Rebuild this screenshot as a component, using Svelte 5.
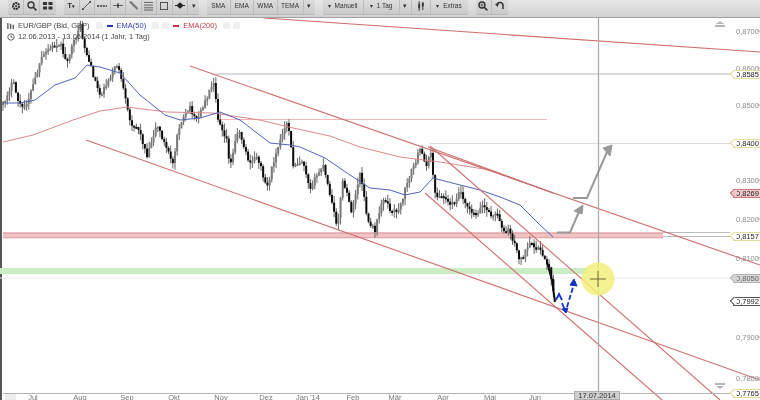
<script>
	// close prices traced by hand as [x, y] in page pixels
	const path = [[3,105],[8,92],[13,82],[18,100],[23,110],[30,95],[37,73],[42,58],[48,50],[55,45],[60,42],[66,62],[72,48],[80,24],[84,45],[90,65],[100,95],[106,85],[112,72],[118,64],[125,98],[130,122],[138,128],[147,155],[157,124],[167,150],[173,163],[178,128],[190,108],[197,120],[207,97],[214,80],[218,118],[227,140],[230,168],[238,128],[250,165],[257,155],[267,188],[277,148],[288,122],[293,165],[303,160],[310,188],[323,165],[337,226],[343,180],[352,213],[360,172],[368,223],[375,230],[383,197],[392,213],[400,208],[407,182],[420,150],[427,165],[431,152],[435,195],[443,197],[453,205],[460,190],[467,205],[475,215],[483,205],[490,215],[498,215],[505,235],[508,228],[513,240],[520,260],[530,245],[538,248],[547,262],[552,280],[555,300]];

	const ema50 = "3,103 20,103 35,100 55,85 75,78 87,65 100,67 120,73 140,95 165,115 180,120 200,118 220,112 240,120 270,143 290,145 300,147 325,158 350,175 370,188 390,190 405,195 420,192 433,178 460,185 480,190 500,197 520,205 540,225 553,237";
	const ema200 = "3,142 33,135 73,120 100,111 127,107 167,112 213,113 260,120 293,128 330,136 360,147 400,157 440,162 490,170 553,193";

	const trend = [
		[264,18,760,52],
		[190,66,760,265],
		[86,140,760,380],
		[430,146,720,400],
		[425,193,662,400],
		[428,147,553,193]
	];

	const priceTicks = [
		["0,8700", 31], ["0,8600", 68], ["0,8500", 105], ["0,8300", 180],
		["0,8200", 219], ["0,8100", 258], ["0,7900", 337], ["0,7800", 378]
	];

	const tags = [
		{ label: "0,8585", y: 74, kind: "yellow" },
		{ label: "0,8400", y: 143, kind: "yellow" },
		{ label: "0,8269", y: 193, kind: "red" },
		{ label: "0,8157", y: 236, kind: "yellow" },
		{ label: "0,8050", y: 278, kind: "grey" },
		{ label: "0,7992", y: 301, kind: "dark" },
		{ label: "0,7765", y: 393, kind: "yellow" }
	];

	const months = [
		["Jul", 33], ["Aug", 80], ["Sep", 127], ["Okt", 174], ["Nov", 221], ["Dez", 266],
		["Jan '14", 308], ["Feb", 353], ["Mär", 395], ["Apr", 443], ["Mai", 490], ["Jun", 535]
	];

	// small seeded generator so the candles stay the same on every load
	let seed = 17;
	const rnd = () => {
		seed = (seed * 16807) % 2147483647;
		return seed / 2147483647;
	};

	const closeAt = (x) => {
		for (let i = 1; i < path.length; i++) {
			if (x <= path[i][0]) {
				const [x0, y0] = path[i - 1];
				const [x1, y1] = path[i];
				return y0 + ((y1 - y0) * (x - x0)) / (x1 - x0);
			}
		}
		return path[path.length - 1][1];
	};

	const candles = [];
	let prev = closeAt(3);
	for (let x = 3; x <= 555; x += 2.15) {
		const close = closeAt(x) + (rnd() - 0.5) * 5;
		const top = Math.min(prev, close);
		const bottom = Math.max(prev, close);
		candles.push({
			x,
			high: top - rnd() * 7,
			low: bottom + rnd() * 7,
			top,
			height: Math.max(bottom - top, 2),
			down: close > prev
		});
		prev = close;
	}
</script>

<div class="page">
	<div class="toolbar">
		<div class="group">
			<span class="btn icon"><svg width="10" height="10" viewBox="0 0 10 10"><circle cx="5" cy="5" r="3" fill="none" stroke="#333" stroke-width="2" stroke-dasharray="2 0.6"/><circle cx="5" cy="5" r="1" fill="#333"/></svg></span>
			<span class="btn icon"><svg width="10" height="10" viewBox="0 0 10 10"><circle cx="4" cy="4" r="3" fill="none" stroke="#333" stroke-width="1.4"/><path d="M6 6l3.4 3.4" stroke="#333" stroke-width="1.6"/></svg></span>
			<span class="btn icon"><svg width="10" height="10" viewBox="0 0 10 10"><path d="M0 1h4v3H0zM5.500 1h4v3h-4zM0 5.500h4v3H0zM5.500 5.500h4v3h-4z" fill="#333"/></svg></span>
		</div>
		<div class="group">
			<span class="btn tool text">T<small>▾</small></span>
			<span class="btn tool"><svg width="9" height="9" viewBox="0 0 11 11"><path d="M1 10L10 1" stroke="#444" stroke-width="1"/><rect x="0" y="9" width="2" height="2" fill="#333"/><rect x="9" y="0" width="2" height="2" fill="#333"/></svg></span>
			<span class="btn tool"><svg width="10" height="4" viewBox="0 0 11 4"><path d="M0 2h11" stroke="#333" stroke-width="1.6" stroke-dasharray="2.200 1"/></svg></span>
			<span class="btn tool"><svg width="10" height="7" viewBox="0 0 11 7"><path d="M0 3.500h11" stroke="#555"/><path d="M5.500 1v5" stroke="#333" stroke-width="1.6"/></svg></span>
			<span class="btn tool"><svg width="9" height="9" viewBox="0 0 9 9"><path d="M0 1L2 0l7 7-1 2z" fill="#777"/></svg></span>
			<span class="btn tool"><svg width="9" height="10" viewBox="0 0 10 10"><path d="M0 1h10M0 4h10M0 7h10M0 9.500h10" stroke="#555"/></svg></span>
			<span class="btn tool"><svg width="8" height="8" viewBox="0 0 9 9"><rect x="0.500" y="0.500" width="8" height="8" fill="none" stroke="#444"/></svg></span>
			<span class="btn tool"><svg width="10" height="7" viewBox="0 0 11 7"><path d="M5.500 0l4 3.500-4 3.500-4-3.500z" fill="#222"/><path d="M0 3.500h11" stroke="#222"/></svg></span>
			<span class="btn arrow">▾</span>
		</div>
		<div class="group">
			<span class="btn study">SMA</span>
			<span class="btn study">EMA</span>
			<span class="btn study">WMA</span>
			<span class="btn study tema">TEMA</span>
			<span class="btn arrow">▾</span>
		</div>
		<div class="group">
			<span class="btn manual"><i>▾</i>Manuell</span>
			<span class="btn day"><i>▾</i>1 Tag</span>
			<span class="btn arrow wide">▾</span>
			<span class="btn bars"><svg width="8" height="10" viewBox="0 0 8 11"><path d="M2 0v11M6 1v9" stroke="#333"/><path d="M1 3h2v5H1zM5 2h2v4H5z" fill="#333"/></svg></span>
			<span class="btn extras"><i>▾</i>Extras</span>
		</div>
		<div class="group">
			<span class="btn icon"><svg width="10" height="10" viewBox="0 0 10 10"><circle cx="4" cy="4" r="3" fill="none" stroke="#333" stroke-width="1.4"/><path d="M6 6l3.400 3.400" stroke="#333" stroke-width="1.6"/><path d="M2.500 4h3M4 2.500v3" stroke="#333" stroke-width=".8"/></svg></span>
			<span class="btn icon"><svg width="10" height="9" viewBox="0 0 10 9"><path d="M2 4a3 3 0 1 1 6 1v3" fill="none" stroke="#333" stroke-width="1.500"/><path d="M0 3l2.500 3L4 2.500z" fill="#333"/></svg></span>
		</div>
	</div>

	<div class="chart">
		<svg class="plot" width="760" height="382" viewBox="0 18 760 382">
			<!-- horizontal levels -->
			<line x1="0" y1="278" x2="730" y2="278" stroke="#ececec" />
			<line x1="430" y1="143.500" x2="730" y2="143.500" stroke="#dcdcdc" />
			<line x1="215" y1="74" x2="730" y2="74" stroke="#b8b8b8" />
			<line x1="218" y1="119.500" x2="547" y2="119.500" stroke="#f2b8b8" />
			<line x1="663" y1="232.500" x2="730" y2="232.500" stroke="#bbb" />
			<line x1="663" y1="236.500" x2="730" y2="236.500" stroke="#bbb" />
			<rect x="3" y="232.500" width="660" height="6" fill="#f0c4c4" />
			<line x1="3" y1="233" x2="663" y2="233" stroke="#dc9494" />
			<line x1="3" y1="237.500" x2="663" y2="237.500" stroke="#e4a8a8" />
			<rect x="0" y="268" width="588" height="6" fill="#cbecc5" />

			<!-- candles -->
			{#each candles as c}
				<line x1={c.x} y1={c.high} x2={c.x} y2={c.low} stroke="#666" stroke-width="1" />
				<rect x={c.x - 1} y={c.top} width="2" height={c.height} fill={c.down ? "#0c0c0c" : "#7a7a7a"} />
			{/each}
			<polyline points="547,262 552,280 555,302" fill="none" stroke="#0c0c0c" stroke-width="2" />

			<!-- averages -->
			<polyline class="curve" points={ema200} stroke="#dc8a8a" />
			<polyline class="curve" points={ema50} stroke="#5364b8" />

			<!-- trend lines -->
			{#each trend as [x1, y1, x2, y2]}
				<line {x1} {y1} {x2} {y2} stroke="#cf6f6f" stroke-width="1.100" />
			{/each}

			<!-- crosshair -->
			<line x1="598.500" y1="18" x2="598.500" y2="393" stroke="#a8a8a8" stroke-width="1.200" />
			<circle cx="598" cy="279" r="16.500" fill="#f2ee7c" fill-opacity="0.85" />
			<path d="M590 279h16M598 271v16" stroke="#6b6b35" stroke-width="1" />

			<!-- hand drawn arrows -->
			<path class="grey-arrow" d="M557 232.500h13l10-23" />
			<path d="M583 205l-9 6 8 3z" fill="#999" stroke="#999" />
			<path class="grey-arrow" d="M573 198h14l20-46" />
			<path d="M612 145l-9 3 7 8z" fill="#999" stroke="#999" />
			<path class="blue-arrow" d="M556 300l3-6 3 6" />
			<path class="blue-arrow" d="M562 303l3 7" />
			<path d="M562 309l6-1-2 5z" fill="#1433c4" stroke="#1433c4" />
			<path class="blue-arrow" d="M567 307l7-23" stroke-dasharray="5 2.500" />
			<path d="M570 285l4-6 3 7z" fill="#1433c4" stroke="#1433c4" />

			<!-- right axis -->
			{#each priceTicks as [label, y]}
				<text class="price" x="736" y={y + 3}>{label}</text>
				<line x1="757" y1={y} x2="760" y2={y} stroke="#aaa" />
			{/each}

			<!-- bottom axis -->
			<line x1="3" y1="393.500" x2="760" y2="393.500" stroke="#b5b5b5" />
			<rect x="5" y="394" width="11" height="6" fill="#ececec" />
			{#each months as [label, x]}
				<text class="month" {x} y="400" text-anchor="middle">{label}</text>
			{/each}

			<!-- scroll handles -->
			<path d="M716 24l4-3 4 3zM715 25h10v2h-10z" fill="#b5b5b5" />
			<path d="M715 383h10v2h-10zM716 386h8l-4 3z" fill="#b5b5b5" />
		</svg>

		<div class="legend">
			<div class="legend-row">
				<svg class="symbol" width="8" height="8" viewBox="0 0 9 9"><path d="M1 1v7M4 2v6M7 3v5" stroke="#555" stroke-width="1.500"/></svg>
				<span class="name">EUR/GBP (Bid, GBP)</span>
				<span class="ghost first"></span>
				<span class="dash blue"></span>
				<span class="ema blue-text">EMA(50)</span>
				<span class="ghost first"></span>
				<span class="ghost"></span>
				<span class="dash red"></span>
				<span class="ema red-text">EMA(200)</span>
				<span class="ghost first"></span>
				<span class="ghost"></span>
			</div>
			<div class="legend-row">
				<svg class="symbol clock" width="8" height="8" viewBox="0 0 10 10"><circle cx="5" cy="5" r="4" fill="none" stroke="#444"/><path d="M5 2.500V5l2 1" fill="none" stroke="#444"/></svg>
				<span class="name">12.06.2013 - 13.06.2014 (1 Jahr, 1 Tag)</span>
			</div>
		</div>

		{#each tags as tag}
			<span class="tag {tag.kind}" style="top: {tag.y - 18}px">{tag.label}</span>
		{/each}

		<span class="date-box">17.07.2014</span>
	</div>
</div>

<style>
	:global(body) {
		margin: 0;
		background: #fff;
	}

	.page {
		width: 760px;
		height: 400px;
		display: flex;
		flex-direction: column;
		overflow: hidden;
		font-family: "Liberation Sans", Arial, sans-serif;
		filter: blur(0.4px);
	}

	.toolbar {
		height: 18px;
		flex: none;
		box-sizing: border-box;
		display: flex;
		gap: 8px;
		padding-left: 8px;
		background: linear-gradient(#e6e6e6, #d2d2d2);
		border-bottom: 1px solid #a2a2a2;
	}

	.group {
		height: 14px;
		display: flex;
		background: linear-gradient(#dcdcdc, #cacaca);
		border-radius: 0 0 2px 2px;
		box-shadow: 0 1px 0 #b8b8b8;
	}

	.btn {
		display: flex;
		align-items: center;
		justify-content: center;
		box-sizing: border-box;
		height: 100%;
		border-right: 1px solid #bcbcbc;
		font-size: 6.500px;
		color: #333;
		padding-bottom: 3px;
		white-space: nowrap;
	}

	.btn:last-child {
		border-right: 0;
	}

	.btn i {
		font-style: normal;
		font-size: 6px;
		margin-right: 4px;
	}

	.icon { width: 16px; }
	.tool { width: 15.500px; }
	.text { font-size: 8px; font-weight: bold; }
	.text small { font-size: 5px; }
	.arrow { width: 11px; font-size: 7px; }
	.arrow.wide { width: 12px; }
	.study { width: 23.500px; }
	.tema { width: 26px; }
	.manual { width: 41px; }
	.day { width: 36px; }
	.bars { width: 19px; }
	.extras { width: 37px; }

	.chart {
		flex: 1;
		position: relative;
		background: #fefefe;
		box-shadow: inset 2px 0 0 #555;
	}

	.plot {
		position: absolute;
		inset: 0;
		display: block;
	}

	.curve {
		fill: none;
		stroke-width: 1;
	}

	.grey-arrow {
		fill: none;
		stroke: #999;
		stroke-width: 2;
	}

	.blue-arrow {
		fill: none;
		stroke: #1433c4;
		stroke-width: 1.800;
	}

	.price {
		font-size: 7.500px;
		fill: #8c8c8c;
	}

	.month {
		font-size: 7.500px;
		fill: #777;
	}

	.legend {
		position: absolute;
		left: 7px;
		top: 2px;
		display: flex;
		flex-direction: column;
		gap: 0;
		font-size: 7.500px;
		line-height: 11px;
		color: #444;
	}

	.legend-row {
		display: flex;
		align-items: center;
	}

	.symbol {
		margin-right: 3px;
	}

	.ghost {
		width: 7px;
		height: 7px;
		margin-left: 3px;
		background: #efefef;
		border-radius: 1px;
	}

	.ghost.first {
		margin-left: 6px;
	}

	.dash {
		width: 6px;
		height: 2px;
		margin: 0 4px 0 4px;
	}

	.dash.blue { background: #2a35b0; }
	.dash.red { background: #c8303a; }
	.blue-text { color: #3742b4; }
	.red-text { color: #c4404a; }

	.tag {
		position: absolute;
		right: 0;
		width: 27px;
		height: 9px;
		box-sizing: border-box;
		margin-top: -4.500px;
		padding-left: 2px;
		font-size: 7.500px;
		line-height: 7.500px;
		color: #222;
		background: #fff;
		border: 1px solid #e6da94;
		border-right: 0;
	}

	.tag::before {
		content: "";
		position: absolute;
		left: -3px;
		top: 0.500px;
		width: 5px;
		height: 5px;
		background: inherit;
		border-left: 1px solid;
		border-bottom: 1px solid;
		border-color: inherit;
		transform: rotate(45deg);
	}

	.tag.red { background: #f0caca; border-color: #c87878; }
	.tag.grey { background: #d6d6d6; border-color: #b5b5b5; color: #666; }
	.tag.dark { border-color: #555; }

	.date-box {
		position: absolute;
		left: 574px;
		top: 373px;
		width: 46px;
		height: 9px;
		background: #cfcfcf;
		border: 1px solid #b0b0b0;
		box-sizing: border-box;
		font-size: 7.500px;
		line-height: 7.500px;
		text-align: center;
		color: #333;
	}
</style>
